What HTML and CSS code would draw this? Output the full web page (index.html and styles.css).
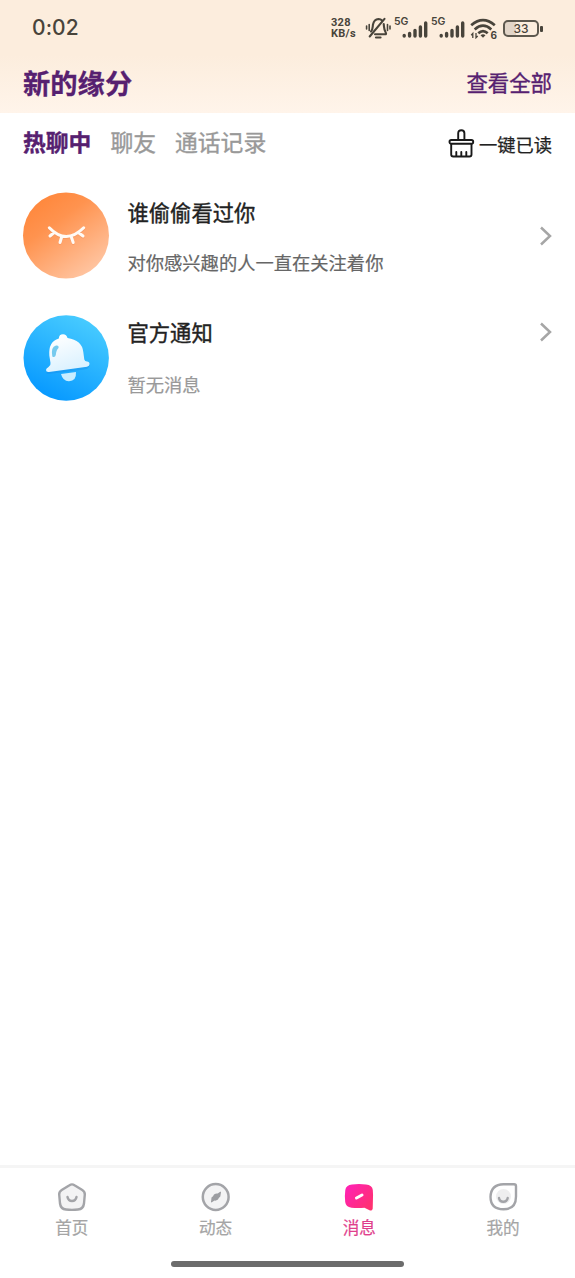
FILE: index.html
```html
<!DOCTYPE html>
<html lang="zh-CN">
<head>
<meta charset="utf-8">
<title>消息</title>
<link rel="stylesheet" href="styles.css">
</head>
<body>
<div class="screen">
  <header class="top">
    <div class="status">
      <span class="clock">0:02</span>
      <div class="indicators">
        <div class="speed"><span>328</span><span>KB/s</span></div>
        <svg class="mute" width="26" height="24" viewBox="0 0 26 24" fill="none" stroke="#48443b" stroke-width="2.100" stroke-linecap="round">
          <path d="M6 15.500C8 13.500 7.500 11 8 8.500C8.700 5 10.500 3.200 13.500 3C15 3 16.200 3.500 17 4.500M18.700 8C19.200 11 18.700 13.500 20.700 16.500C21.500 18 21 18.300 20 18.300H10"/>
          <path d="M4.700 20.500L19.500 2.800"/><path d="M11 21.500H15.500" stroke-width="2.200"/>
          <path d="M4.200 8.500V14.500M1.600 10V13M22.500 8.500V14.500M25 10V13" stroke-width="1.600"/>
        </svg>
        <div class="cell"><span class="net">5G</span>
          <svg width="26" height="17" viewBox="0 0 26 17" stroke="#48443b" stroke-width="3.400" stroke-linecap="round"><path d="M2.200 14.500V15M7.600 12.500V15M13 9.500V15M18.400 6V15M23.700 2V15"/></svg>
        </div>
        <div class="cell"><span class="net">5G</span>
          <svg width="26" height="17" viewBox="0 0 26 17" stroke="#48443b" stroke-width="3.400" stroke-linecap="round"><path d="M2.200 14.500V15M7.600 12.500V15M13 9.500V15M18.400 6V15M23.700 2V15"/></svg>
        </div>
        <div class="wifi">
          <svg width="27" height="21" viewBox="0 0 27 21" fill="none" stroke="#48443b" stroke-width="2.700">
            <path d="M1.200 7.200Q13 -3 24.800 7.200M4.700 11.400Q13 4 21.300 11.400M8.300 15.200Q13 11 17.700 15.200"/>
            <path d="M10.500 17.200L13 19.700L15.500 17.200Q13 15.500 10.500 17.200Z" fill="#48443b" stroke="none"/>
            <path d="M2.800 20V15.500L1.200 17.300M6 15V19.700L7.700 18" stroke-width="1.300"/>
          </svg>
          <span class="gen">6</span>
        </div>
        <div class="battery"><span>33</span></div>
      </div>
    </div>
    <div class="heading"><h1>新的缘分</h1><a class="all">查看全部</a></div>
  </header>

  <nav class="tabs">
    <span class="tab current">热聊中</span><span class="tab">聊友</span><span class="tab">通话记录</span>
    <div class="read">
      <svg width="27" height="29" viewBox="0 0 27 29" fill="none" stroke="#191919" stroke-width="1.900" stroke-linejoin="round" stroke-linecap="round">
        <path d="M10.200 11V4.200Q10.200 1.200 13.300 1.200Q16.400 1.200 16.400 4.200V11"/>
        <rect x="1.500" y="11" width="23.700" height="3.800" rx="1.800"/>
        <path d="M3.200 15V25.500Q3.200 27.500 5.200 27.500H21.500Q23.500 27.500 23.500 25.500V15M8.300 23V27M13.300 23V27M18.300 23V27"/>
      </svg>
      <span>一键已读</span>
    </div>
  </nav>

  <main class="list">
    <section class="row visitors">
      <svg class="avatar" width="88" height="88" viewBox="0 0 88 88">
        <defs><linearGradient id="orange" x1=".2" y1=".08" x2=".82" y2=".95"><stop stop-color="#ff883d"/><stop offset=".3" stop-color="#ff934f"/><stop offset="1" stop-color="#ffc7a5"/></linearGradient></defs>
        <circle cx="44" cy="43.500" r="43" fill="url(#orange)"/>
        <g fill="none" stroke-width="3" stroke-linecap="round">
          <path d="M27.300 35.800Q44 53.300 61.700 35.800M31.500 41L28 44M39.500 45.500L38 50.500M49.500 45.500L51.200 50.500M57 41L61 44" stroke="#ed8f5c" opacity=".45" transform="translate(0 1)"/>
          <path d="M27.300 35.800Q44 53.300 61.700 35.800M31.500 41L28 44M39.500 45.500L38 50.500M49.500 45.500L51.200 50.500M57 41L61 44" stroke="#fffaf5"/>
        </g>
      </svg>
      <div class="words"><h2>谁偷偷看过你</h2><p>对你感兴趣的人一直在关注着你</p></div>
      <svg class="arrow" width="14" height="20" viewBox="0 0 14 20"><path d="M2 1.500L11 10L2 18.500"/></svg>
    </section>
    <section class="row official">
      <svg class="avatar" width="88" height="88" viewBox="0 0 88 88">
        <defs><linearGradient id="blue" x1=".7" y1=".05" x2=".25" y2=".95"><stop stop-color="#46caff"/><stop offset="1" stop-color="#0799ff"/></linearGradient>
        <linearGradient id="bell" x1=".3" y1="0" x2=".7" y2="1"><stop stop-color="#fff"/><stop offset="1" stop-color="#d7f0ff"/></linearGradient></defs>
        <circle cx="44.200" cy="44" r="42.700" fill="url(#blue)"/>
        <path d="M39 60L54 58Q54.500 67 47 67.300Q41 67.500 39 60Z" fill="#c8edff"/>
        <path d="M25 57.500L66 52.200Q68.500 51.200 67 53Q66 55 62 55.600L28 59.800Q23 60.200 25 57.500Z" fill="#1686e2" opacity=".35"/>
        <path d="M36.800 24.500Q37 20.200 41 20.200Q44.700 20.200 45.500 24Q60 26 61.300 38L62.300 45.500Q62.800 47.500 65 47.500Q67.500 47.500 67.500 50Q67.500 52.300 65 52.700L27 58Q24 58.300 24 56Q24 54.500 26.500 53Q29 51.500 28.500 49L27.300 41.500Q26.300 27.500 36.800 24.500Z" fill="url(#bell)"/>
        <path d="M30.300 42.500Q28.500 33 34 31.500Q37.200 31 36.500 34Q34.200 36 33.800 41Q33 44 30.300 42.500Z" fill="#75caee"/>
      </svg>
      <div class="words"><h2>官方通知</h2><p>暂无消息</p></div>
      <svg class="arrow" width="14" height="20" viewBox="0 0 14 20"><path d="M2 1.500L11 10L2 18.500"/></svg>
    </section>
  </main>

  <footer class="dock">
    <div class="items">
      <div class="item"><svg width="32" height="32" viewBox="0 0 32 32" fill="#f3f3f4" stroke="#a3a4a8" stroke-width="2.400" stroke-linecap="round" stroke-linejoin="round"><path d="M13.500 4.200Q16 2.500 18.500 4.200L26.300 9Q29 10.700 28.800 13.500L28 22.500Q27.300 28 22 28.500Q16 29.200 10 28.500Q4.700 28 4 22.500L3.200 13.500Q3 10.700 5.700 9Z"/><path d="M11.500 16Q12.300 20 16 20Q19.700 20 20.500 16" fill="none"/></svg><span>首页</span></div>
      <div class="item"><svg width="32" height="32" viewBox="0 0 32 32"><circle cx="15.700" cy="16" r="12.900" fill="#f3f3f4" stroke="#a3a4a8" stroke-width="2.500"/><path d="M20.500 10.500Q21.500 11 20.700 13L20.300 15.500Q18.500 17 18 18.500Q16 20 14.500 19.500L11.500 21.500Q10.500 21.500 11.200 19.500L11.500 16.500Q13.300 15.500 14 13.500Q16 12 17.700 12.500Z" fill="#9c9da1"/></svg><span>动态</span></div>
      <div class="item selected"><svg width="32" height="32" viewBox="0 0 32 32"><defs><linearGradient id="pink" x2="1" y2=".8"><stop stop-color="#ff20ba"/><stop offset="1" stop-color="#ff316e"/></linearGradient></defs><path d="M9 3.500Q16 2.500 23 3.500Q29.300 4 29.800 9Q30.300 14 29.900 20L29.700 27.700Q29 30.300 26.500 29.300L21.500 26.700Q15 27.500 8.500 26.700Q2.800 26 2.200 21Q1.500 15 2.300 9Q3 4 9 3.500Z" fill="url(#pink)"/><path d="M13.500 17L19 14" stroke="#fff" stroke-width="3" stroke-linecap="round"/></svg><span>消息</span></div>
      <div class="item"><svg width="32" height="32" viewBox="0 0 32 32"><path d="M16.500 3.200H27Q29 3.200 29 5.200V15.500Q29 28.300 16.500 28.300Q3.500 28 3.500 15.700Q4 3.500 16.500 3.200Z" fill="#fff" stroke="#a3a4a8" stroke-width="2.400"/><circle cx="16.500" cy="15.500" r="7.500" fill="#eeeeef"/><path d="M12 17Q12.500 20.700 16.300 20.700Q20 20.700 20.700 17" fill="none" stroke="#a3a4a8" stroke-width="2.400" stroke-linecap="round"/></svg><span>我的</span></div>
    </div>
    <div class="home"></div>
  </footer>
</div>
</body>
</html>
```
FILE: styles.css
```css
* { box-sizing: border-box; }
body { margin: 0; background: #fff; font-family: "Noto Sans CJK SC", sans-serif; color: #222; }
h1, h2, p { margin: 0; }
svg { display: block; flex: none; }
.screen { width: 575px; height: 1278px; display: flex; flex-direction: column; overflow: hidden; }
.top { height: 113px; flex: none; background: linear-gradient(#fceddd 0, #fceddd 55px, #fff4ea 113px); }
.status { height: 56px; padding: 0 32px 0 32px; display: flex; align-items: center; justify-content: space-between; color: #48443b; }
.clock { font: 500 21px/30px Inter, sans-serif; letter-spacing: .1px; }
.indicators { display: flex; align-items: center; height: 30px; }
.speed { width: 34px; display: flex; flex-direction: column; font: 700 11px/11px Roboto, sans-serif; letter-spacing: .3px; }
.mute { margin-right: 3px; }
.cell { width: 37px; height: 24px; display: grid; }
.cell > * { grid-area: 1 / 1; }
.cell svg { margin: 5px 0 0 8px; width: 26px; }
.net { font: 600 10.500px/12px Inter, sans-serif; }
.wifi { position: relative; margin: 1px 6px 0 2px; }
.gen { position: absolute; right: 0; bottom: -1px; font: 700 10px/10px Inter, sans-serif; background: #fceddd; }
.battery { position: relative; width: 36px; height: 17px; margin-right: 4px; border: 2px solid #5d584e; border-radius: 5px; background: linear-gradient(90deg, #e2d5c8 11px, transparent 11px); font: 500 12px/13px Inter, sans-serif; text-align: center; }
.battery::after { content: ""; position: absolute; left: 35px; top: 4px; width: 2.500px; height: 6px; border-radius: 1px; background: #48443b; }
.heading { height: 52px; padding: 0 23px; display: flex; align-items: center; justify-content: space-between; color: #562070; }
h1 { font-size: 27.300px; line-height: 40px; font-weight: 700; -webkit-text-stroke: .3px; }
.all { font-size: 21.400px; line-height: 30px; -webkit-text-stroke: .35px; }
.tabs { height: 58px; padding: 0 23px; display: flex; align-items: center; gap: 19px; }
.tab { font-size: 22.800px; line-height: 32px; color: #999; -webkit-text-stroke: .35px; }
.current { color: #562070; font-weight: 700; }
.read { margin: 3px 0 0 auto; display: flex; align-items: center; gap: 4px; font-size: 18.300px; line-height: 28px; -webkit-text-stroke: .25px; }
.list { flex: 1; margin-top: 2px; }
.row { display: flex; padding: 0 22px; }
.visitors { height: 123px; padding-top: 19px; }
.official { padding-top: 18px; }
.words { flex: 1; margin-left: 17.500px; }
.visitors .words { padding-top: 4px; }
.official .words { padding-top: 2px; }
h2 { font-size: 21.300px; line-height: 32px; font-weight: 400; -webkit-text-stroke: .4px; }
p { font-size: 18.300px; line-height: 28px; color: #666; margin-top: 20px; -webkit-text-stroke: .2px; }
.official p { color: #999; margin-top: 22px; }
.arrow { fill: none; stroke: #a6a6a6; stroke-width: 2.500; }
.visitors .arrow { margin-top: 34px; }
.official .arrow { margin-top: 8px; }
.dock { height: 113px; flex: none; border-top: 3px solid #f5f5f5; display: flex; flex-direction: column; align-items: center; }
.items { width: 100%; height: 93px; padding-top: 13px; display: grid; grid-template-columns: repeat(4, 1fr); }
.item { display: flex; flex-direction: column; align-items: center; font-size: 16.600px; line-height: 24px; color: #a5a5a5; gap: 2px; -webkit-text-stroke: .2px; }
.selected { color: #df3f8d; }
.home { width: 233px; height: 6px; border-radius: 3px; background: #6c6c6c; }
```
